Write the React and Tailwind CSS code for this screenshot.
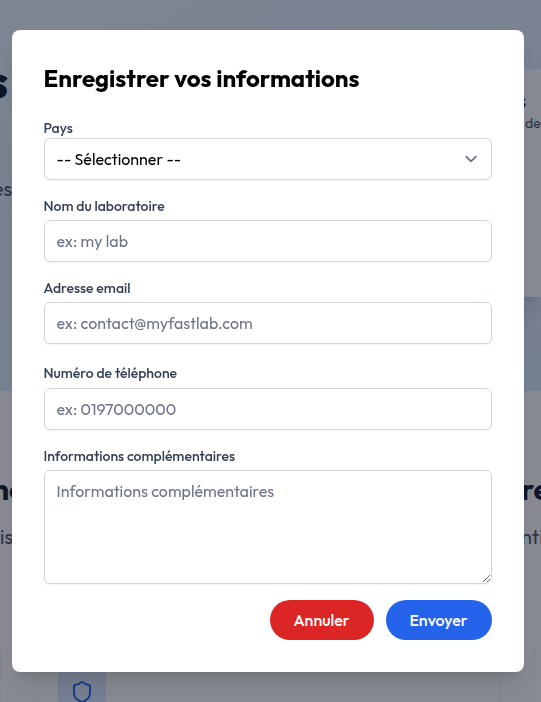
import { Shield } from "lucide-react";

const inputClass =
  "block w-full rounded-md border border-[#d0d5e0] bg-white px-3 py-2 text-base leading-6 text-black shadow-xs placeholder:text-[#6b7489] focus:outline-2 focus:outline-[#2563eb]";
const labelClass = "block text-sm leading-5 font-medium text-[#334155]";
const cardClass = "h-60 w-[468px] shrink-0 rounded-xl border border-[#eef1f5]";

function Hero() {
  return (
    <section className="flex h-[391px] justify-between bg-linear-to-br from-[#eaf2fc] to-[#dbeafe]">
      <div className="flex w-3 flex-col items-end gap-16 pt-12 text-right">
        <h1 className="pr-1 text-5xl leading-16 font-extrabold text-[#0f172a]">s</h1>
        <p className="text-xl leading-[26px] text-[#475569]">es</p>
      </div>
      <div className="mt-[69px] h-57 w-8 bg-white pt-5 pl-2 whitespace-nowrap shadow-xl">
        <p className="text-xl leading-6 font-semibold text-[#0f172a]">s</p>
        <p className="pl-2 text-sm leading-5 text-[#475569]">de</p>
      </div>
    </section>
  );
}

function Features() {
  return (
    <section className="bg-white pt-20">
      <div className="flex justify-between text-3xl leading-9 font-bold text-[#0f172a]">
        <span className="flex w-6 justify-end">nc</span>
        <span className="w-5">re</span>
      </div>
      <div className="mt-4 flex justify-between text-xl leading-7 text-[#475569]">
        <span className="flex w-[13px] justify-end">nis</span>
        <span className="w-5">nti</span>
      </div>
      <div className="mt-[92px] flex justify-center gap-8 pr-[7px]">
        <article className={cardClass} />
        <article className={`${cardClass} p-6`}>
          <div className="flex size-12 items-center justify-center rounded-lg bg-[#dbeafe]">
            <Shield className="size-6 text-[#2563eb]" />
          </div>
        </article>
        <article className={cardClass} />
      </div>
    </section>
  );
}

function RegisterDialog() {
  return (
    <div className="fixed inset-0 flex items-center justify-center bg-[#111827]/50 pr-[17px] pl-[11px]">
      <div
        role="dialog"
        aria-modal="true"
        aria-labelledby="dialog-title"
        className="w-full max-w-lg rounded-lg bg-white p-8 shadow-xl"
      >
        <h2 id="dialog-title" className="mb-6 text-2xl leading-8 font-bold text-black">
          Enregistrer vos informations
        </h2>
        <form className="flex flex-col gap-4">
          <div>
            <label htmlFor="country" className={labelClass}>
              Pays
            </label>
            <div className="relative">
              <select id="country" className={`${inputClass} appearance-none`}>
                <option>-- Sélectionner --</option>
              </select>
              <svg
                viewBox="0 0 20 20"
                fill="none"
                stroke="currentColor"
                strokeWidth="1.5"
                strokeLinecap="round"
                strokeLinejoin="round"
                className="pointer-events-none absolute inset-y-0 right-[9px] my-auto size-6 text-[#64748b]"
              >
                <path d="m6 8 4 4 4-4" />
              </svg>
            </div>
          </div>
          <div>
            <label htmlFor="lab" className={labelClass}>
              Nom du laboratoire
            </label>
            <input id="lab" type="text" placeholder="ex: my lab" className={`${inputClass} mt-1`} />
          </div>
          <div>
            <label htmlFor="email" className={labelClass}>
              Adresse email
            </label>
            <input
              id="email"
              type="email"
              placeholder="ex: contact@myfastlab.com"
              className={`${inputClass} mt-1`}
            />
          </div>
          <div>
            <label htmlFor="phone" className="text-sm font-medium text-[#334155]">
              Numéro de téléphone
            </label>
            <input id="phone" type="tel" placeholder="ex: 0197000000" className={`${inputClass} mt-1`} />
          </div>
          <div>
            <label htmlFor="details" className={labelClass}>
              Informations complémentaires
            </label>
            <textarea
              id="details"
              rows={4}
              placeholder="Informations complémentaires"
              className={`${inputClass} mt-1`}
            />
          </div>
          <div className="flex justify-end gap-3">
            <button
              type="button"
              className="h-10 w-[104px] rounded-full bg-[#dc2626] text-base font-medium text-white"
            >
              Annuler
            </button>
            <button
              type="submit"
              className="h-10 w-[106px] rounded-full bg-[#2563eb] text-base font-medium text-white"
            >
              Envoyer
            </button>
          </div>
        </form>
      </div>
    </div>
  );
}

export default function App() {
  return (
    <div className="h-screen overflow-hidden font-['Outfit','Lato',sans-serif]">
      <Hero />
      <Features />
      <RegisterDialog />
    </div>
  );
}
